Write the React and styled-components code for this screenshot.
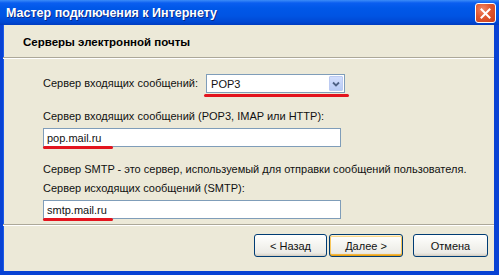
import React from "react";
import styled, { createGlobalStyle } from "styled-components";

const Global = createGlobalStyle`
  html, body { margin: 0; padding: 0; background: #ECE9D8; }
  body { font-family: "Liberation Sans", Arial, sans-serif; }
  * { box-sizing: border-box; }
`;

const Window = styled.div`
  width: 499px;
  height: 275px;
  display: flex;
  flex-direction: column;
  background: #0842d4;
  overflow: hidden;
`;

const TitleBar = styled.div`
  height: 25px;
  flex: none;
  display: flex;
  align-items: center;
  justify-content: space-between;
  padding: 0 3px 0 6px;
  background: linear-gradient(to bottom, #3c8cf8 0px, #0a5ef0 3px, #0058e8 8px, #0054e3 16px, #0048d4 22px, #003cc0 25px);
`;

const Title = styled.div`
  color: #fff;
  font-family: "Liberation Sans", Arial, sans-serif;
  font-weight: bold;
  font-size: 12.5px;
  text-shadow: 1px 1px 0 #0a2a8a;
`;

const CloseButton = styled.div`
  width: 21px;
  height: 20px;
  border: 1px solid #fff;
  border-radius: 3px;
  background: radial-gradient(circle at 35% 30%, #f0886a 0%, #e0562e 45%, #c9401a 100%);
  display: flex;
  align-items: center;
  justify-content: center;
  margin-top: 1px;
`;

const Frame = styled.div`
  flex: 1;
  display: flex;
  flex-direction: column;
  background: #ECE9D8;
  border-left: 3px solid #0842d4;
  border-right: 5px solid #0842d4;
  border-bottom: 4px solid #0842d4;
  box-shadow: inset 1px 0 0 #1c5ae8;
`;

const Header = styled.div`
  height: 32px;
  display: flex;
  align-items: center;
  padding-left: 20px;
  padding-top: 1px;
  font-weight: bold;
  font-size: 11.5px;
  color: #000;
`;

const Separator = styled.div`
  height: 2px;
  border-top: 1px solid #ACA899;
  border-bottom: 1px solid #fff;
`;

const Content = styled.div`
  flex: 1;
  padding: 15px 0 0 40px;
  display: flex;
  flex-direction: column;
  font-size: 11px;
  color: #111;
`;

const Row = styled.div`
  display: flex;
  align-items: center;
  gap: 8px;
`;

const Label = styled.div`
  margin-top: ${(p) => p.$mt || 0}px;
  height: 13px;
  line-height: 13px;
  white-space: nowrap;
`;

const Marked = styled.div`
  position: relative;
  width: ${(p) => p.$w}px;
  margin-top: ${(p) => p.$mt || 0}px;
`;

const RedMark = styled.div`
  position: absolute;
  left: ${(p) => p.$l || 0}px;
  top: ${(p) => p.$t}px;
  width: ${(p) => p.$w}px;
  height: 3px;
  border-radius: 2px;
  background: #e3141e;
`;

const Combo = styled.div`
  height: 19px;
  border: 1px solid #7F9DB9;
  background: #fff;
  display: flex;
  align-items: stretch;
`;

const ComboText = styled.div`
  flex: 1;
  padding-left: 4px;
  display: flex;
  align-items: center;
`;

const ComboArrow = styled.div`
  width: 14px;
  margin: 1px;
  background: linear-gradient(to bottom, #d2defc, #b8cbf6);
  border: 1px solid #bccbf2;
  border-radius: 1px;
  display: flex;
  align-items: center;
  justify-content: center;
`;

const Input = styled.div`
  height: 19px;
  border: 1px solid #7F9DB9;
  background: #fff;
  padding-left: 3px;
  display: flex;
  align-items: center;
`;

const Footer = styled.div`
  height: 45px;
  display: flex;
  align-items: flex-start;
  padding: 8px 0 0 251px;
`;

const Button = styled.div`
  width: ${(p) => p.$w}px;
  height: 23px;
  margin-right: ${(p) => p.$mr || 0}px;
  border: 1px solid #003C74;
  border-radius: 3px;
  background: linear-gradient(to bottom, #ffffff 0%, #f6f6f2 40%, #ecebe6 85%, #d6d0c5 100%);
  box-shadow: ${(p) =>
    p.$default
      ? "inset 0 1px 0 #fff0cf, inset 0 -1px 0 #e5a01a, inset 1px 0 0 #f8c65a, inset -1px 0 0 #f8c65a, inset 0 2px 0 #fbd88a, inset 0 -2px 0 #f4b63e"
      : "inset 0 -1px 0 #d6d0c5"};
  display: flex;
  align-items: center;
  justify-content: center;
  font-size: 11px;
  color: #111;
`;

export default function App() {
  return (
    <>
      <Global />
      <Window>
        <TitleBar>
          <Title>Мастер подключения к Интернету</Title>
          <CloseButton>
            <svg width="11" height="11" viewBox="0 0 11 11">
              <path d="M1.5 1.5 L9.5 9.5 M9.5 1.5 L1.5 9.5" stroke="#fff" strokeWidth="2" strokeLinecap="square" />
            </svg>
          </CloseButton>
        </TitleBar>
        <Frame>
          <Header>Серверы электронной почты</Header>
          <Separator />
          <Content>
            <Row>
              <Label>Сервер входящих сообщений:</Label>
              <Marked $w={139}>
                <Combo>
                  <ComboText>POP3</ComboText>
                  <ComboArrow>
                    <svg width="8" height="6" viewBox="0 0 8 6">
                      <path d="M1 1.5 L4 4.5 L7 1.5" stroke="#4d6185" strokeWidth="1.8" fill="none" />
                    </svg>
                  </ComboArrow>
                </Combo>
                <RedMark $l={-2} $t={20} $w={145} />
              </Marked>
            </Row>
            <Label $mt={17}>Сервер входящих сообщений (POP3, IMAP или HTTP):</Label>
            <Marked $w={298} $mt={5}>
              <Input>pop.mail.ru</Input>
              <RedMark $l={0} $t={18} $w={70} />
            </Marked>
            <Label $mt={16}>Сервер SMTP - это сервер, используемый для отправки сообщений  пользователя.</Label>
            <Label $mt={6}>Сервер исходящих сообщений (SMTP):</Label>
            <Marked $w={298} $mt={5}>
              <Input>smtp.mail.ru</Input>
              <RedMark $l={0} $t={18} $w={70} />
            </Marked>
          </Content>
          <Separator />
          <Footer>
            <Button $w={73} $mr={2}>&lt; Назад</Button>
            <Button $w={74} $mr={10} $default>Далее &gt;</Button>
            <Button $w={75}>Отмена</Button>
          </Footer>
        </Frame>
      </Window>
    </>
  );
}
